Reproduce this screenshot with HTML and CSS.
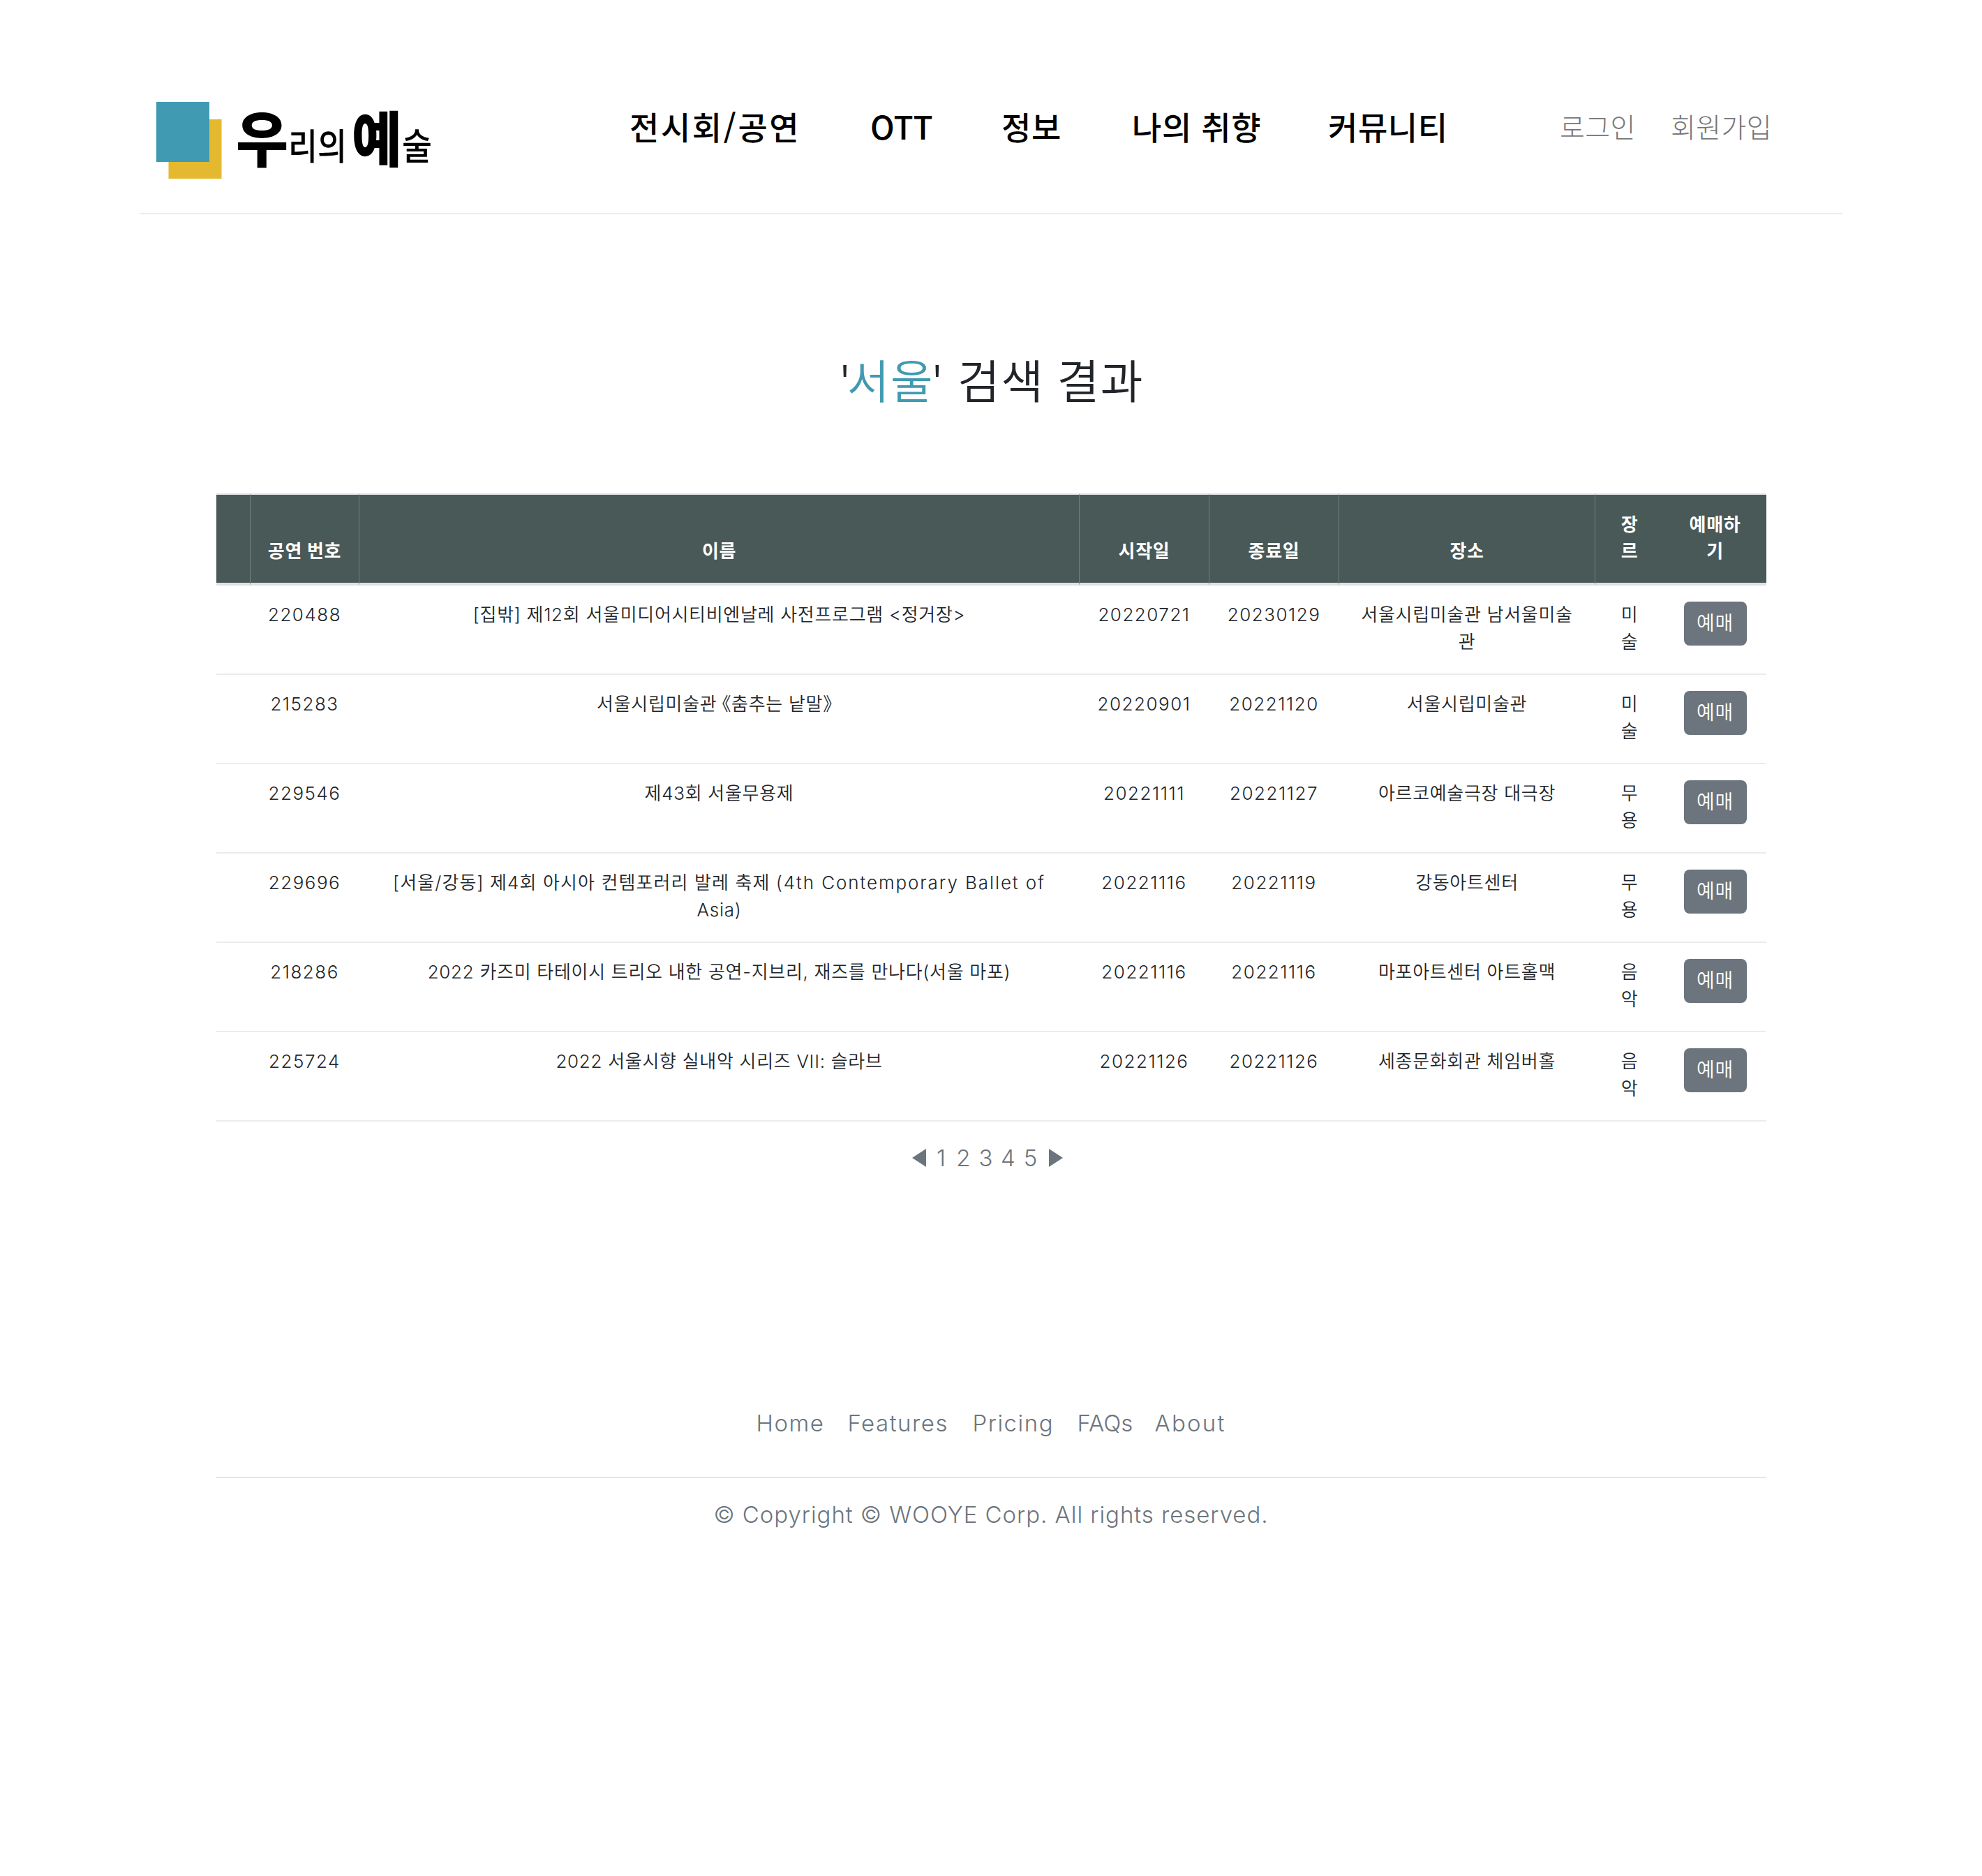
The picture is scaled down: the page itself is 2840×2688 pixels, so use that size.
FILE: index.html
```html
<!DOCTYPE html>
<html lang="ko">
<head>
<meta charset="utf-8">
<title>우리의 예술</title>
<link rel="stylesheet" href="styles.css">
</head>
<body>
<header class="header">
  <a class="logo">
    <svg width="400" height="120" viewBox="0 0 400 120">
      <rect x="17.5" y="26" width="76" height="85" fill="#e5b92f"/>
      <rect x="0" y="1" width="76" height="86" fill="#3f9ab2"/>
      <text class="logo-big" x="114" y="87" textLength="75" lengthAdjust="spacingAndGlyphs">우</text>
      <text class="logo-small" x="189" y="84" textLength="84" lengthAdjust="spacingAndGlyphs">리의</text>
      <text class="logo-big" x="280" y="87" textLength="72" lengthAdjust="spacingAndGlyphs">예</text>
      <text class="logo-small" x="352" y="84" textLength="43" lengthAdjust="spacingAndGlyphs">술</text>
    </svg>
  </a>
  <nav class="nav">
    <a class="nav-shows">전시회/공연</a>
    <a class="nav-ott">OTT</a>
    <a>정보</a>
    <a>나의 취향</a>
    <a>커뮤니티</a>
  </nav>
  <div class="account">
    <a>로그인</a>
    <a>회원가입</a>
  </div>
</header>
<main class="content">
  <h1 class="title">'<span class="keyword">서울</span>' 검색 결과</h1>
  <table class="results">
    <colgroup><col class="c-blank"><col class="c-no"><col class="c-name"><col class="c-date"><col class="c-date"><col class="c-place"><col class="c-genre"><col class="c-book"></colgroup>
    <thead>
      <tr><th></th><th>공연 번호</th><th>이름</th><th>시작일</th><th>종료일</th><th>장소</th><th>장<br>르</th><th>예매하<br>기</th></tr>
    </thead>
    <tbody>
      <tr><td></td><td class="num">220488</td><td>[집밖] 제12회 서울미디어시티비엔날레 사전프로그램 &lt;정거장&gt;</td><td class="num">20220721</td><td class="num">20230129</td><td>서울시립미술관 남서울미술<br>관</td><td>미<br>술</td><td><a class="btn">예매</a></td></tr>
      <tr><td></td><td class="num">215283</td><td>서울시립미술관<span class="quote">《</span>춤추는 낱말》</td><td class="num">20220901</td><td class="num">20221120</td><td>서울시립미술관</td><td>미<br>술</td><td><a class="btn">예매</a></td></tr>
      <tr><td></td><td class="num">229546</td><td>제43회 서울무용제</td><td class="num">20221111</td><td class="num">20221127</td><td>아르코예술극장 대극장</td><td>무<br>용</td><td><a class="btn">예매</a></td></tr>
      <tr><td></td><td class="num">229696</td><td><span class="wide">[서울/강동] 제4회 아시아 컨템포러리 발레 축제 </span><span class="latin">(4th Contemporary Ballet of</span><br>Asia)</td><td class="num">20221116</td><td class="num">20221119</td><td>강동아트센터</td><td>무<br>용</td><td><a class="btn">예매</a></td></tr>
      <tr><td></td><td class="num">218286</td><td>2022 카즈미 타테이시 트리오 내한 공연-지브리, 재즈를 만나다(서울 마포)</td><td class="num">20221116</td><td class="num">20221116</td><td>마포아트센터 아트홀맥</td><td>음<br>악</td><td><a class="btn">예매</a></td></tr>
      <tr><td></td><td class="num">225724</td><td>2022 서울시향 실내악 시리즈 VII: 슬라브</td><td class="num">20221126</td><td class="num">20221126</td><td>세종문화회관 체임버홀</td><td>음<br>악</td><td><a class="btn">예매</a></td></tr>
    </tbody>
  </table>
  <div class="pager">
    <svg class="prev" width="20" height="26" viewBox="0 0 20 26"><path d="M20 0v26L0 13z"/></svg>
    <a>1</a><a>2</a><a>3</a><a>4</a><a>5</a>
    <svg class="next" width="20" height="26" viewBox="0 0 20 26"><path d="M0 0v26L20 13z"/></svg>
  </div>
</main>
<footer class="footer">
  <div class="links"><a>Home</a><a>Features</a><a>Pricing</a><a class="faqs">FAQs</a><a class="about">About</a></div>
  <p class="copy">© Copyright © WOOYE Corp. All rights reserved.</p>
</footer>
</body>
</html>
```
FILE: styles.css
```css
* { box-sizing: border-box; }
body {
  margin: 0;
  background: #fff;
  color: #212529;
  font-family: Inter, "Noto Sans CJK KR", sans-serif;
  font-weight: 300;
  font-size: 26px;
  line-height: 39px;
}
.header {
  display: flex;
  width: 2440px;
  height: 307px;
  margin: 0 auto;
  padding: 145px 0 0 24px;
  border-bottom: 2px solid #e9ecef;
}
.logo { width: 678px; }
.logo svg { overflow: visible; }
.logo-big { font: 900 86px "Noto Sans CJK KR", sans-serif; }
.logo-small { font: 500 52px "Noto Sans CJK KR", sans-serif; }
.nav {
  display: grid;
  grid-template-columns: 345px 188px 187px 281px 332px;
  font-family: "Noto Sans CJK KR", sans-serif;
  font-size: 46px;
  font-weight: 500;
  line-height: 70px;
  letter-spacing: 0.6px;
  color: #000;
  white-space: nowrap;
}
.nav-shows { letter-spacing: 2.6px; }
.nav-ott { letter-spacing: 0; }
.account {
  display: grid;
  grid-template-columns: 159px 150px;
  font-size: 39px;
  line-height: 75px;
  letter-spacing: 0.4px;
  color: #777;
  white-space: nowrap;
}
.content { width: 2221px; margin: 0 auto; }
.title {
  margin: 200px 0 0;
  height: 200px;
  font-size: 66px;
  font-weight: 350;
  line-height: 80px;
  text-align: center;
  letter-spacing: 1.5px;
  word-spacing: -2px;
}
.keyword { margin: 0 -5px 0 -8px; color: #3f9ab2; }
.results {
  width: 2221px;
  table-layout: fixed;
  border-collapse: separate;
  border-spacing: 0;
  text-align: center;
  white-space: nowrap;
  letter-spacing: 0.7px;
}
.c-blank { width: 48px; }
.c-no { width: 156px; }
.c-name { width: 1032px; }
.c-date { width: 186px; }
.c-place { width: 367px; }
.c-genre { width: 99px; }
.c-book { width: 147px; }
th {
  height: 132px;
  padding: 0 0 26px 1px;
  vertical-align: bottom;
  background: #495957;
  color: #fff;
  font-weight: 700;
  line-height: 38px;
  border-top: 2px solid #dee2e6;
  border-bottom: 4px solid #dee2e6;
  border-left: 1px solid #74807e;
}
th:first-child, th:nth-child(8) { border-left: 0; }
td {
  height: 128px;
  padding: 22px 0 0 2px;
  vertical-align: top;
  font-weight: 350;
  border-bottom: 2px solid #e9ecef;
}
.num { letter-spacing: 1.5px; }
.wide { letter-spacing: 1.1px; }
.latin { letter-spacing: 1.9px; }
.quote { margin-left: -6px; }
.btn {
  display: block;
  width: 90px;
  height: 63px;
  margin: 1px 0 0 27px;
  border-radius: 8px;
  background: #6c757d;
  color: #fff;
  font-size: 28px;
  line-height: 62px;
}
.pager {
  display: flex;
  justify-content: center;
  align-items: center;
  height: 50px;
  margin: 27px 11px 0 0;
  font-size: 33px;
  color: #6c757d;
  fill: #6c757d;
}
.pager a { width: 32px; text-align: center; }
.prev { margin-right: 6px; }
.next { margin-left: 10px; }
.footer {
  width: 2221px;
  margin: 330px auto 0;
  color: #6c757d;
  font-size: 33px;
  line-height: 50px;
  letter-spacing: 1.5px;
}
.links {
  display: grid;
  grid-template-columns: 131px 179px 150px 111px 102px;
  justify-content: center;
  height: 104px;
  border-bottom: 2px solid #e3e6e9;
}
.faqs { letter-spacing: 0; }
.about { letter-spacing: 2.2px; }
.copy {
  margin: 27px 0 0;
  text-align: center;
  letter-spacing: 0.95px;
}
```
